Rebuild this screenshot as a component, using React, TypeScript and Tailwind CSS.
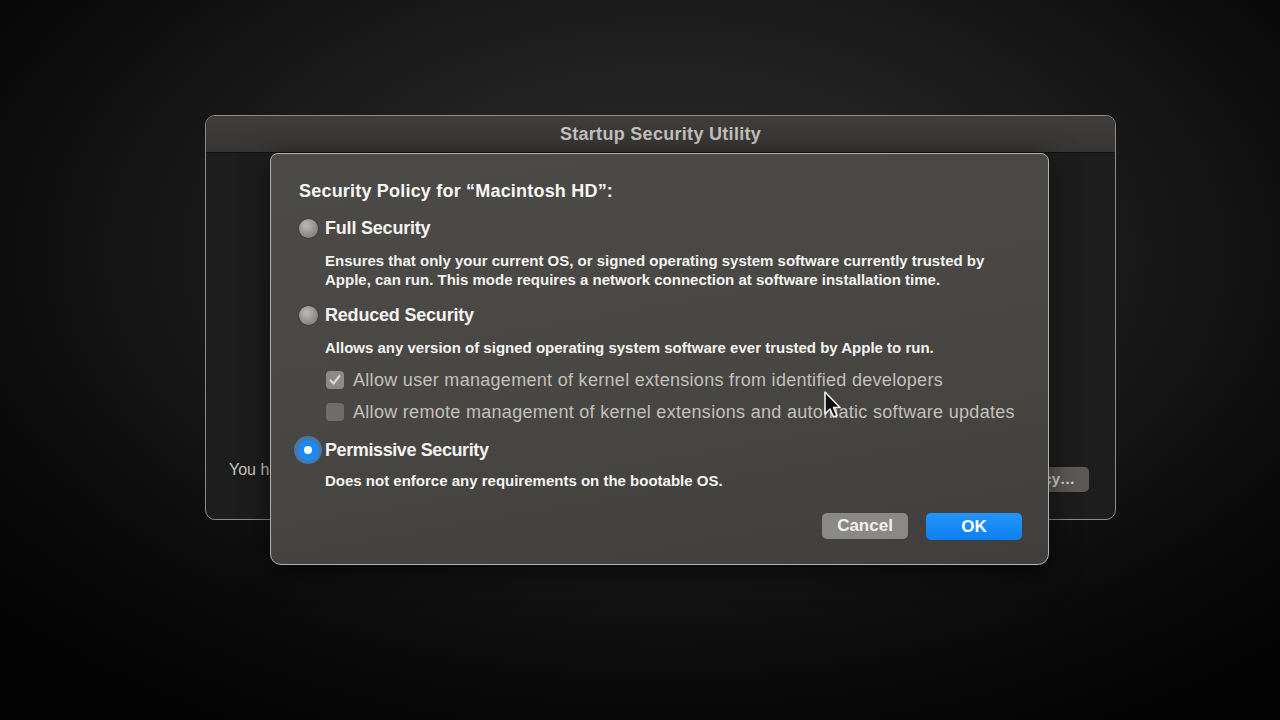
import React from "react";

const font = { fontFamily: '"Liberation Sans", Arial, sans-serif' };

const Radio = ({ selected }: { selected?: boolean }) =>
  selected ? (
    <div className="w-[28px] h-[28px] -ml-[5px] rounded-full bg-[#4aa3f8]/55 flex items-center justify-center shrink-0">
      <div className="w-[21px] h-[21px] rounded-full bg-[#1b8af5] flex items-center justify-center">
        <div className="w-[8px] h-[8px] rounded-full bg-white" />
      </div>
    </div>
  ) : (
    <div className="w-[19px] h-[19px] rounded-full bg-[radial-gradient(circle_at_40%_35%,#bdbbb8_0%,#8e8c89_60%,#767471_100%)] shadow-[0_0_0_1px_rgba(0,0,0,0.15)] shrink-0" />
  );

const Checkbox = ({ checked }: { checked?: boolean }) => (
  <div
    className={
      "w-[18px] h-[18px] rounded-[4px] flex items-center justify-center shrink-0 " +
      (checked ? "bg-[#8c8a87]" : "bg-[#6f6d6a]")
    }
  >
    {checked && (
      <svg width="14" height="14" viewBox="0 0 14 14" fill="none">
        <path d="M2.5 7.5 L5.5 10.5 L11.5 3" stroke="#dcdad6" strokeWidth="2.2" strokeLinecap="round" strokeLinejoin="round" />
      </svg>
    )}
  </div>
);

const Cursor = () => (
  <svg className="absolute left-[823px] top-[390px]" width="20" height="30" viewBox="0 0 20 30">
    <path d="M2 2 L2 24 L7 19 L10.5 27 L14 25.5 L10.5 17.5 L17 17.5 Z" fill="#111" stroke="#f2f2f2" strokeWidth="1.6" strokeLinejoin="round" />
  </svg>
);

export default function App() {
  return (
    <div
      className="relative w-[1280px] h-[720px] overflow-hidden bg-[radial-gradient(ellipse_70%_75%_at_52%_35%,#2e2e2e_0%,#1c1c1c_45%,#0a0a0a_80%,#030303_100%)]"
      style={font}
    >
      {/* Back window */}
      <div className="absolute left-[205px] top-[115px] w-[911px] h-[405px] rounded-[10px] border border-[#8d8c8a] bg-[#1d1d1d] overflow-hidden flex flex-col">
        <div className="h-[37px] bg-[linear-gradient(#3f3e3c,#363533)] border-b border-[#111] flex items-center justify-center">
          <span className="text-[18px] font-bold text-[#c4c1bc] tracking-[0.3px]">Startup Security Utility</span>
        </div>
        <div className="flex-1 flex items-end justify-between pl-[23px] pr-[26px] pb-[27px]">
          <span className="text-[16px] text-[#c9c7c3] mb-[10px]">You have selected a security policy.</span>
          <div className="h-[25px] px-[14px] rounded-[5px] bg-[#5b5a58] flex items-center text-[15px] font-bold text-[#d6d4d0]">
            Security Policy…
          </div>
        </div>
      </div>

      {/* Sheet */}
      <div className="absolute left-[270px] top-[153px] w-[779px] h-[412px] rounded-b-[11px] rounded-t-[8px] border border-[#b4b2ae] bg-[linear-gradient(170deg,#4b4a47_0%,#484744_50%,#403f3d_100%)] shadow-[0_8px_30px_rgba(0,0,0,0.6)] pl-[28px] pr-[26px] pt-[26px] flex flex-col">
        <div className="text-[18px] leading-[22px] font-bold text-[#f7f7f5] tracking-[0.2px]">Security Policy for “Macintosh HD”:</div>

        <div className="mt-[14px] flex items-center gap-[7px] h-[24px]">
          <Radio />
          <span className="text-[18px] font-bold text-[#f4f3f1] tracking-[-0.2px]">Full Security</span>
        </div>
        <div className="mt-[11px] pl-[26px] text-[15px] leading-[19px] font-bold text-[#f4f3f1]">
          Ensures that only your current OS, or signed operating system software currently trusted by
          <br />
          Apple, can run. This mode requires a network connection at software installation time.
        </div>

        <div className="mt-[14px] flex items-center gap-[7px] h-[24px]">
          <Radio />
          <span className="text-[18px] font-bold text-[#f4f3f1] tracking-[-0.2px]">Reduced Security</span>
        </div>
        <div className="mt-[11px] pl-[26px] text-[15px] leading-[19px] font-bold text-[#f4f3f1]">
          Allows any version of signed operating system software ever trusted by Apple to run.
        </div>
        <div className="mt-[11px] pl-[27px] flex items-center gap-[9px] h-[24px]">
          <Checkbox checked />
          <span className="text-[18px] text-[#c3c0bb] tracking-[0.3px]">Allow user management of kernel extensions from identified developers</span>
        </div>
        <div className="mt-[8px] pl-[27px] flex items-center gap-[9px] h-[24px]">
          <Checkbox />
          <span className="text-[18px] text-[#c3c0bb] tracking-[0.3px]">Allow remote management of kernel extensions and automatic software updates</span>
        </div>

        <div className="mt-[14px] flex items-center gap-[3px] h-[24px]">
          <Radio selected />
          <span className="text-[18px] font-bold text-[#f4f3f1] tracking-[-0.4px]">Permissive Security</span>
        </div>
        <div className="mt-[9px] pl-[26px] text-[15px] leading-[19px] font-bold text-[#f4f3f1]">
          Does not enforce any requirements on the bootable OS.
        </div>

        <div className="mt-[23px] flex justify-end gap-[18px]">
          <div className="w-[86px] h-[26px] rounded-[5px] bg-[#8b8986] flex items-center justify-center text-[17px] font-bold text-[#f2f1ef]">
            Cancel
          </div>
          <div className="w-[96px] h-[27px] rounded-[5px] bg-[linear-gradient(#2196fb,#0f80ef)] flex items-center justify-center text-[17px] font-bold text-white">
            OK
          </div>
        </div>
      </div>

      <Cursor />
    </div>
  );
}
